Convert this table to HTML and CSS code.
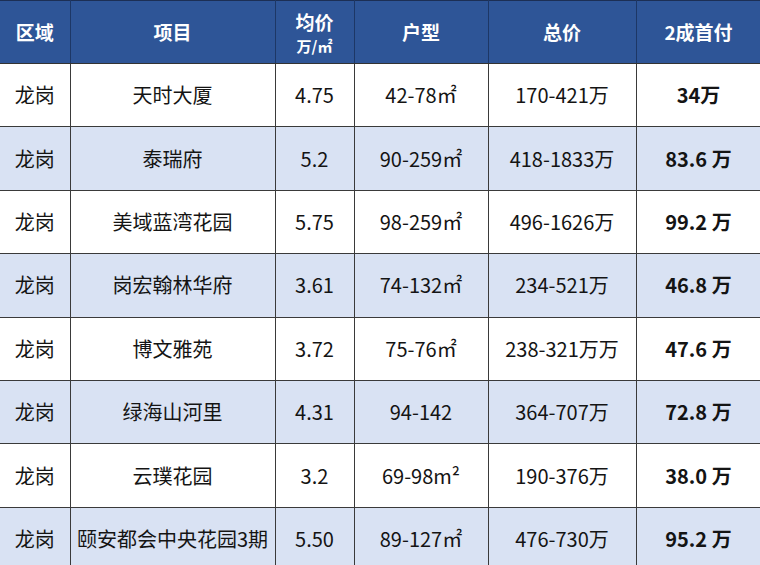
FILE: index.html
```html
<!DOCTYPE html>
<html lang="zh-CN">
<head>
<meta charset="utf-8">
<title>龙岗楼盘</title>
<link rel="stylesheet" href="styles.css">
</head>
<body>
<table class="grid">
  <colgroup>
    <col class="c1"><col class="c2"><col class="c3"><col class="c4"><col class="c5"><col class="c6">
  </colgroup>
  <thead>
    <tr>
      <th>区域</th>
      <th>项目</th>
      <th class="two"><span class="l1">均价</span><span class="l2">万/㎡</span></th>
      <th>户型</th>
      <th>总价</th>
      <th>2成首付</th>
    </tr>
  </thead>
  <tbody>
    <tr><td>龙岗</td><td>天时大厦</td><td>4.75</td><td>42-78㎡</td><td>170-421万</td><td class="b">34万</td></tr>
    <tr><td>龙岗</td><td>泰瑞府</td><td>5.2</td><td>90-259㎡</td><td>418-1833万</td><td class="b">83.6 万</td></tr>
    <tr><td>龙岗</td><td>美域蓝湾花园</td><td>5.75</td><td>98-259㎡</td><td>496-1626万</td><td class="b">99.2 万</td></tr>
    <tr><td>龙岗</td><td>岗宏翰林华府</td><td>3.61</td><td>74-132㎡</td><td>234-521万</td><td class="b">46.8 万</td></tr>
    <tr><td>龙岗</td><td>博文雅苑</td><td>3.72</td><td>75-76㎡</td><td>238-321万万</td><td class="b">47.6 万</td></tr>
    <tr><td>龙岗</td><td>绿海山河里</td><td>4.31</td><td>94-142</td><td>364-707万</td><td class="b">72.8 万</td></tr>
    <tr><td>龙岗</td><td>云璞花园</td><td>3.2</td><td>69-98m²</td><td>190-376万</td><td class="b">38.0 万</td></tr>
    <tr><td>龙岗</td><td>颐安都会中央花园3期</td><td>5.50</td><td>89-127㎡</td><td>476-730万</td><td class="b">95.2 万</td></tr>
  </tbody>
</table>
</body>
</html>
```
FILE: styles.css
```css
html, body {
  margin: 0;
  padding: 0;
  background: #ffffff;
  overflow: hidden;
}
.grid {
  border-collapse: collapse;
  table-layout: fixed;
  width: 761px;
  font-family: "Noto Sans CJK SC", "Noto Sans", sans-serif;
  color: #141414;
}
.c1 { width: 70px; }
.c2 { width: 205px; }
.c3 { width: 79px; }
.c4 { width: 134px; }
.c5 { width: 148px; }
.c6 { width: 125px; }
.grid th {
  background: #2e5597;
  color: #ffffff;
  font-weight: 700;
  font-size: 19px;
  height: 62px;
  padding: 0;
  border-top: 1px solid #1c2f55;
  border-left: 1px solid #1d3766;
  border-right: 1px solid #1d3766;
  border-bottom: 1px solid #333333;
  text-align: center;
  vertical-align: middle;
  line-height: 1.2;
}
.grid th:first-child { border-left: none; }
.grid th.two .l1 { display: block; font-size: 19px; line-height: 25px; margin-top: 1px; }
.grid th.two .l2 { display: block; font-size: 15px; line-height: 23px; }
.grid td {
  height: 62.4px;
  padding: 0;
  font-size: 20px;
  text-align: center;
  vertical-align: middle;
  border: 1px solid #3a3a3a;
  line-height: 1.2;
  white-space: nowrap;
}
.grid td:first-child { border-left: none; }
.grid tbody tr:nth-child(even) td { background: #d9e2f3; }
.grid tbody tr:nth-child(odd) td { background: #ffffff; }
.grid td.b { font-weight: 700; }
```
